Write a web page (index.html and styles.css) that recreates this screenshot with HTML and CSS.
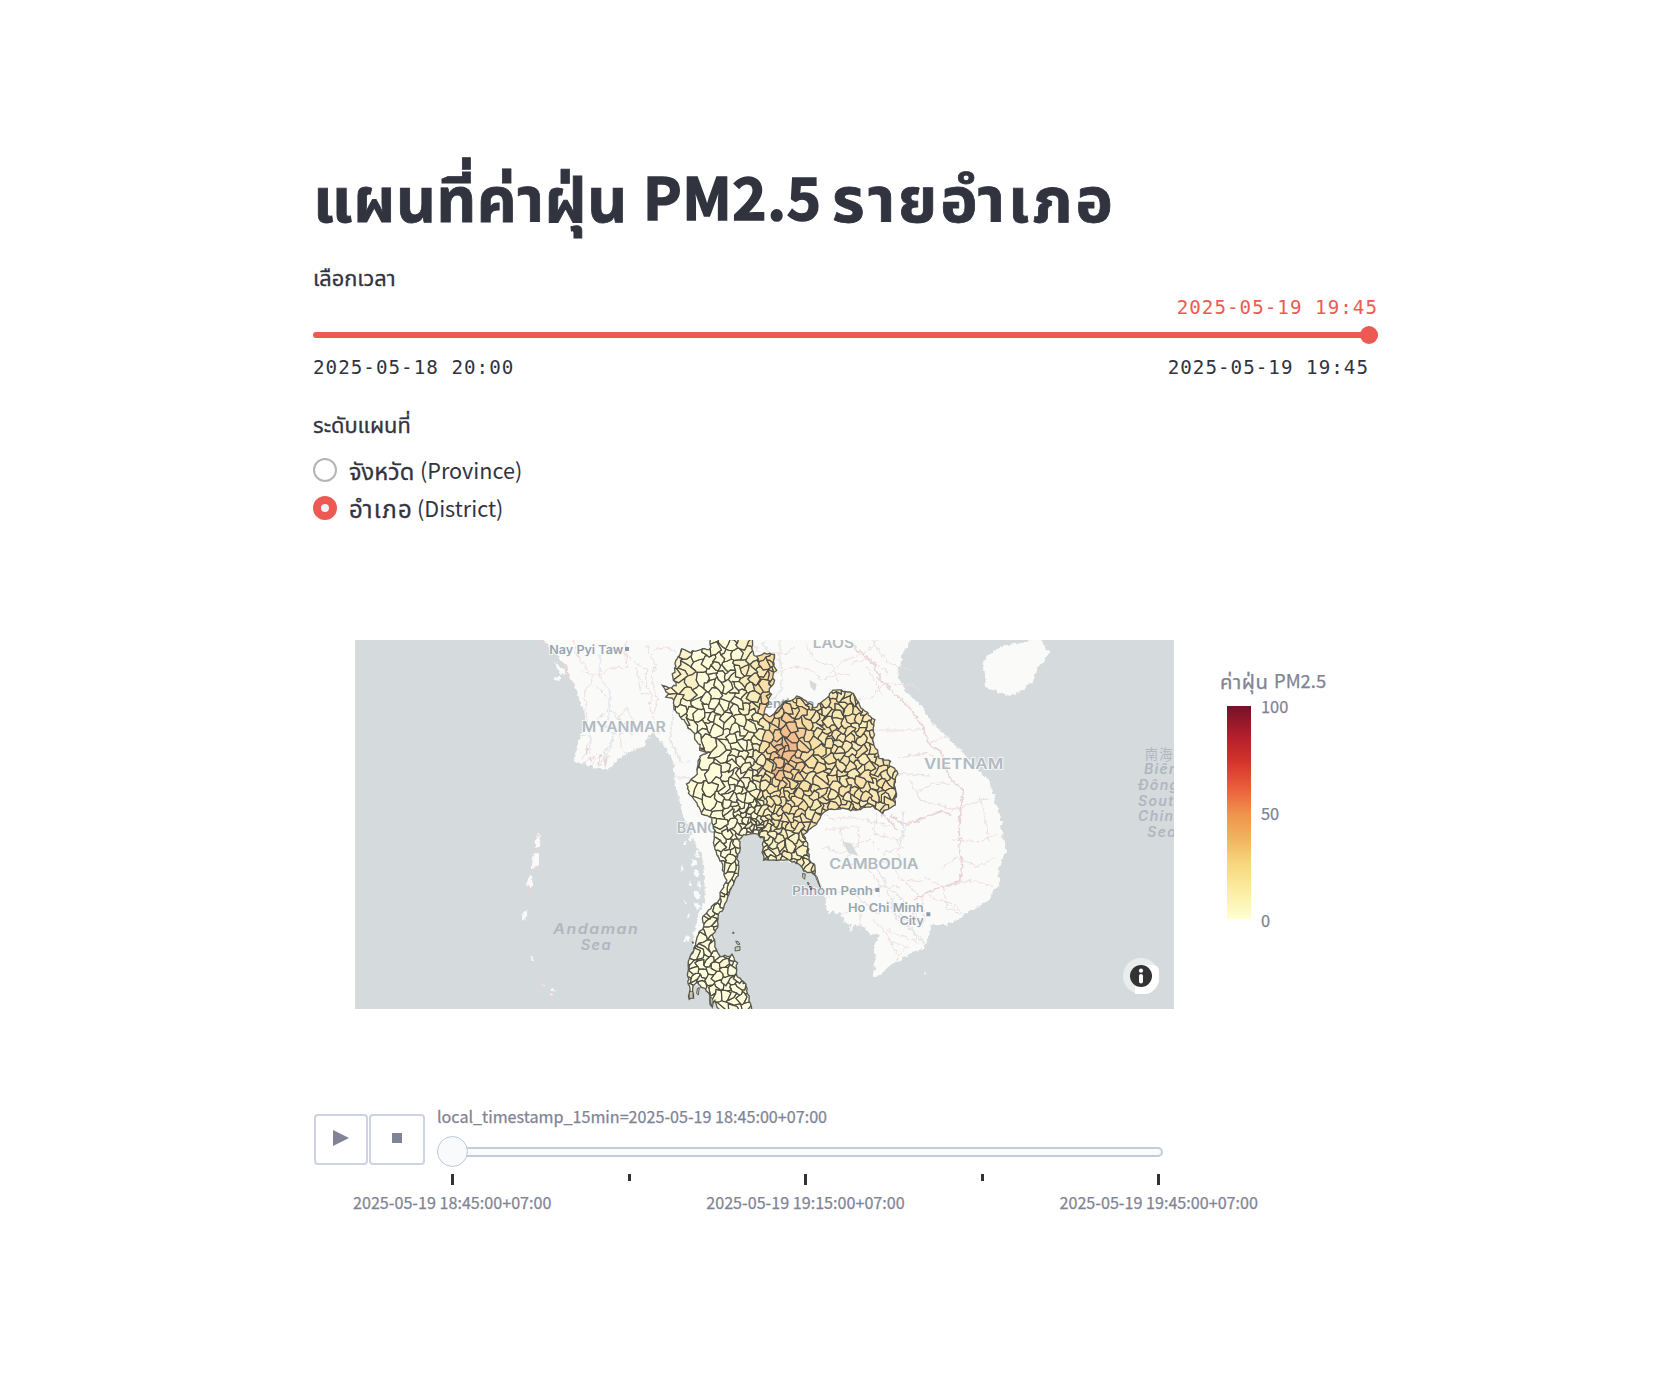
FILE: index.html
```html
<!DOCTYPE html>
<html lang="th">
<head>
<meta charset="utf-8">
<title>แผนที่ค่าฝุ่น PM2.5 รายอำเภอ</title>
<link rel="stylesheet" href="styles.css">
</head>
<body>
<main class="page">
  <h1 class="title"><span class="th t1">แผนที่ค่าฝุ่น</span><span class="t2">PM2.5</span><span class="th t3">รายอำเภอ</span></h1>

  <section class="time">
    <p class="label">เลือกเวลา</p>
    <p class="mono value">2025-05-19 19:45</p>
    <div class="track"><span class="thumb"></span></div>
    <div class="mono range"><span>2025-05-18 20:00</span><span>2025-05-19 19:45</span></div>
  </section>

  <section class="level">
    <p class="label">ระดับแผนที่</p>
    <div class="option"><span class="radio"></span><span class="th o1">จังหวัด</span><span class="lat">(Province)</span></div>
    <div class="option"><span class="radio on"></span><span class="th o2">อำเภอ</span><span class="lat">(District)</span></div>
  </section>

  <section class="chart">
    <svg class="map" viewBox="-855 30 2457 1107" preserveAspectRatio="none">
      <defs>
        <filter id="rough" x="-5%" y="-5%" width="110%" height="110%" color-interpolation-filters="sRGB"><feTurbulence type="fractalNoise" baseFrequency=".07" numOctaves="3" seed="4"/><feDisplacementMap in="SourceGraphic" scale="17" xChannelSelector="R" yChannelSelector="G"/></filter>
        <clipPath id="thai"><path id="outline" d="M212 20L210 58 195 55 150 66 127 56 120 75 107 92 104 125 97 133 108 165 95 172 70 168 85 190 80 200 100 208 103 235 125 265 150 300 165 310 163 330 178 345 180 362 205 365 182 378 172 400 170 435 142 460 148 490 175 525 185 550 215 565 225 600 220 640 235 688 245 695 250 730 262 750 245 780 235 810 205 840 190 860 190 890 175 915 165 945 160 965 150 980 142 1030 148 1070 148 1105 160 1102 158 1070 170 1055 185 1070 205 1090 215 1130 222 1110 240 1145 335 1145 325 1100 315 1060 288 1035 290 1000 278 975 240 980 232 965 222 940 220 915 232 890 235 860 250 835 260 805 275 770 292 735 297 710 290 680 300 655 297 630 310 615 345 612 370 625 368 650 370 688 400 690 440 690 475 700 490 720 525 735 525 705 505 690 505 645 490 615 500 605 530 582 550 545 600 535 640 540 700 530 725 548 765 525 768 490 763 460 773 425 750 405 752 392 720 385 700 340 703 270 670 240 640 190 610 183 580 178 560 205 535 222 525 235 515 225 490 210 473 198 455 212 440 210 410 240 390 262 372 250 385 220 393 195 385 180 402 160 400 135 408 122 400 100 402 75 380 70 345 78 335 60 340 20Z"/></clipPath>
      </defs>
      <rect class="sea" x="-855" y="30" width="2457" height="1107"/>
      <g filter="url(#rough)">
        <path class="land" d="M-305 10L-260 60-225 110-205 150-190 180-180 215-165 245-170 290-185 340-198 395-170 400-135 415-100 420-75 400-55 380-20 360 15 345 30 315 40 305 75 350 100 400 105 450 115 500 130 560 150 590 165 640 185 670 190 720 197 770 190 820 172 870 160 910 160 965 155 1030 160 1060 205 1075 240 1145 325 1145 310 1060 283 1035 285 1000 275 980 240 985 217 940 227 890 245 835 270 770 292 710 285 680 295 655 292 630 305 610 345 607 372 625 372 685 475 700 525 735 545 770 557 805 558 835 575 858 600 848 610 870 630 885 632 912 640 885 665 887 690 912 720 915 704 945 708 985 698 1040 720 1036 745 1010 820 965 850 955 870 910 875 885 920 885 980 850 1050 810 1060 780 1078 770 1075 720 1098 665 1085 610 1082 560 1065 510 1050 455 1020 425 970 370 910 310 865 265 842 225 795 185 772 130 790 70 825 10Z"/>
        <path class="land" d="M1028 95L1065 60 1100 45 1150 38 1200 25 1228 70 1195 110 1182 150 1150 180 1108 198 1070 185 1035 170ZM-258 95L-240 105-220 130-225 138-245 125ZM-258 140L-240 138-240 155-252 152ZM-305 612L-298 615-300 650-312 655-313 630ZM-318 670L-306 670-306 700-312 712-325 715-322 690ZM-333 735L-322 735-324 770-335 772-340 760ZM-352 845L-340 842-338 860-345 872-354 865ZM-326 984h8v8h-8zM-298 1064h6v6h-6zM-270 1090h6v6h-6zM-262 1075h5v8h-5zM852 1028h7v5h-7z"/>
        <path class="land" d="M150 610l10 8-4 14-10-6zM130 632l8-2 4 12-10 2zM165 660l12 4 2 18-12 0zM152 690l16 0 6 16-14 6zM125 708l6 4-3 14-6-4zM160 722l14 0 4 20-14-2zM172 756l10 4 2 16-12-4zM148 755l8 6-4 8zM160 786l14-4 6 18-12 8zM165 820l12 0 2 14-12 4zM130 810l7 6-5 6zM145 850l5 2-3 12-6-2zM140 915l8 6-6 16-8-2z"/>
        <g class="border">
          <path d="M-200 30l8 40 22 30 25 40 0 25-18 10 0 60 8 70-25 20M-175 120l30 15 30 0 20-20 55-3-3-80M-130 170l30 30M-10 110l12 80 25 2M-60 60l50 40 30 20 0 50M-70 270l30-35 35 70M-155 330l-5 40-15 20M-60 290l3 55 15 30M-150 380l-20 25M-130 370l-12 35M-110 365l10 45M-90 380l-18 15M0 150l35 40-5 50 30 70M45 60l30-10 30 15M20 45l25 60-10 50 18 50-12 50M105 365l20 30 25 0M105 440l45 5M335 50l40 20 70 0 15-20M420 30l0 90M410 130l50-20 55 10 30 30 50-20 35 5M500 40l20 50 60 20 15 50M570 130l45-40 60-20 40-40M635 100l50-15 60 45"/>
          <path d="M640 50l60 50 20 50 35 30 60 60 30 45 25 60 35 20 25 80 40 35-12 90 0 80 10 60-10 45-80 25-55 30" class="strong"/>
          <path d="M730 160l90 5 20 20M700 300l145 0M620 220l80-20 30-40M680 110l45 80M695 30l50 70 70 20M870 340l50-25M775 380l90-10 40 50M770 430l100 5M810 450l30 60 95 25M830 490l45-30 60 0M935 540l60-20 50-15M1020 500l20 90 10 50M935 630l85 5 60-25M710 550l-10 60 75 20 0 60M550 550l30 20 40-10 60 10 70 20M555 600l100-10 0 60-60 20-45-20M600 590l10 60 80-20 40 40 60-20M640 640l-20 60 60 10 40 50 0 40M700 690l60 10 20 50 70 5M560 800l60-20 30 20 70-30 60 0M610 850l50-30 0 80M650 800l60 50 40-20 30 50M730 760l30 60 50 10 25 60M790 750l60 60 0 80M850 740l60 30 10 60 40 20M900 720l50-40 60 30 60-30M920 770l80-20 60 20M870 800l60 20 40 30M700 870l40 40 30 60M740 900l100 40M740 930l60 20-30 40"/>
          <path class="strong" d="M750 555l40 30 60-20 50-20 30 10M725 550l50 50"/>
          <path class="strong" d="M-302 34l22 12 20 20M-235 95l16 20 2 28M-305 615l6 12M-322 668l12-2M-308 705l-4 14M-332 772l0 16-6 8M-300 1066l8 6M-268 1078l6 18M-158 355l-4 22M-140 375l-10 24M-118 372l-8 30M-100 380l-4 26"/>
        </g>
        <path class="river" d="M-120 70l0 70 30 45 0 55 40 40 30 40M-95 240l-35 30-20 40-2 60M-90 250l-15 40 30 20-20 60-30 40M-80 320l-30 60M365 40l60 60 0 80-30 30M100 230l-10 100 30 60M790 540l0 60-10 50M700 690l40 80 50 40 60 70M740 810l60 60 30 60M760 800l-5 40 100 100M200 1010l10 60M780 630l30-60"/>
      </g>
      <path class="sea" d="M608 635l25 5 22 38-30-10zM508 150l22 12-5 22-13-12zM560 860l20-20 10 20 12-8-8 20-26-2z"/>
      <g class="names">
        <text class="city" x="-272" y="73" textLength="222" lengthAdjust="spacingAndGlyphs">Nay Pyi Taw</text>
        <text x="-175" y="306" textLength="252" lengthAdjust="spacingAndGlyphs">MYANMAR</text>
        <text x="518" y="54" textLength="124" lengthAdjust="spacingAndGlyphs">LAOS</text>
        <text x="852" y="418" textLength="238" lengthAdjust="spacingAndGlyphs">VIETNAM</text>
        <text x="568" y="717" textLength="268" lengthAdjust="spacingAndGlyphs">CAMBODIA</text>
        <text x="110" y="609" textLength="215" lengthAdjust="spacingAndGlyphs">BANGKOK</text>
        <text class="city" x="334" y="234" textLength="188" lengthAdjust="spacingAndGlyphs">Vientiane</text>
        <text class="city" x="457" y="795" textLength="242" lengthAdjust="spacingAndGlyphs">Phnom Penh</text>
        <text class="city" x="624" y="846" textLength="227" lengthAdjust="spacingAndGlyphs">Ho Chi Minh</text>
        <text class="city" x="779" y="884" textLength="72" lengthAdjust="spacingAndGlyphs">City</text>
        <g class="water">
          <text x="-260" y="912" textLength="258" lengthAdjust="spacingAndGlyphs">Andaman</text><text x="-178" y="959" textLength="94" lengthAdjust="spacingAndGlyphs">Sea</text>
          <text class="cjk" x="1514" y="386">南海</text>
          <text x="1512" y="432">Biển</text><text x="1494" y="480">Đông</text><text x="1494" y="527">South</text><text x="1494" y="573">China</text><text x="1522" y="620">Sea</text>
        </g>
      </g>
      <path class="dot" d="M-45 51h12v12h-12zM706 774h12v12h-12zM859 847h12v12h-12z"/>
      <g>
        <g id="districts" clip-path="url(#thai)"></g>
        <use href="#outline" class="edge"/>
        <path class="isle" d="M286 951l14-2 0 12-15 2zM287 933l8 2 5 8-8 0zM278 907h4v3h-4zM525 735l6 4 10 34-10-22zM503 756l5 6-4 2zM508 768l8 4-3 8zM488 730l8 2-2 16-6-6zM157 935l4 2-2 4zM165 945l3 5-3 5zM172 1075l6-2-3 22-5-4zM148 1085l11 0 0 20-11 0zM212 1100l7 10-1 20-6-12z"/>
      </g>
    </svg>
    <button class="info" aria-label="Info"><svg viewBox="0 0 36 36"><circle cx="18" cy="18" r="18" fill="#fff" fill-opacity=".5"/><path d="M12 36V7h17q7 0 7 6v10q-2 8-9 12-3 1-5 1z" fill="#fff"/><circle cx="18" cy="18" r="11" fill="#333"/><circle cx="18" cy="12.7" r="2.1" fill="#fff"/><rect x="16" y="16" width="4" height="9.5" rx="2" fill="#fff"/></svg></button>
    <aside class="legend">
      <p class="legend-title"><span class="th">ค่าฝุ่น</span><span>PM2.5</span></p>
      <div class="scale"><div class="ramp"></div><div class="nums"><span>100</span><span>50</span><span>0</span></div></div>
    </aside>
  </section>

  <section class="player">
    <button class="btn"><svg width="16" height="16" viewBox="0 0 16 16"><path d="M0 0l16 8-16 8z"/></svg></button>
    <button class="btn stop"><svg width="10" height="10"><rect width="10" height="10"/></svg></button>
    <div class="frames">
      <p class="current">local_timestamp_15min=2025-05-19 18:45:00+07:00</p>
      <div class="rail"><span class="grip"></span></div>
      <div class="ticks"><i></i><i class="minor"></i><i></i><i class="minor"></i><i></i></div>
      <div class="stamps"><span>2025-05-19 18:45:00+07:00</span><span>2025-05-19 19:15:00+07:00</span><span>2025-05-19 19:45:00+07:00</span></div>
    </div>
  </section>
</main>
<script src="districts.js"></script>
</body>
</html>
```
FILE: styles.css
```css
* { box-sizing: border-box; }
body { margin: 0; background: #fff; color: #31333f; font-family: "Noto Sans CJK SC", "Noto Sans Thai", sans-serif; }
p, h1 { margin: 0; white-space: nowrap; }
.page { width: 1656px; height: 1376px; padding: 145px 278px 0 313px; overflow: hidden; display: flex; flex-direction: column; }
.title { height: 100px; line-height: 100px; font-size: 58px; font-weight: 700; display: flex; }
.title .th { font-size: 62px; letter-spacing: .4px; -webkit-text-stroke: .8px #31333f; }
.title .t3 { font-size: 63px; letter-spacing: 3px; }
.t1 { width: 330px; }
.t2 { width: 189px; -webkit-text-stroke: 1.6px #31333f; letter-spacing: .6px; }
.label { font-size: 21.8px; line-height: 30px; height: 30px; -webkit-text-stroke: .3px #31333f; }
.time { height: 146px; margin-top: 17px; }
.mono { font-family: "DejaVu Sans Mono", monospace; font-size: 19.2px; letter-spacing: 1.03px; line-height: 24px; }
.value { color: #ed5a53; text-align: right; height: 24px; margin-top: 4px; }
.track { height: 6px; margin-top: 12px; border-radius: 3px; background: #ed5a53; position: relative; }
.thumb { position: absolute; right: 0; top: -6px; width: 18px; height: 18px; border-radius: 50%; background: #ed5a53; }
.range { display: flex; justify-content: space-between; padding-right: 9px; margin-top: 18px; }
.level { margin-top: 1px; height: 231px; }
.level .label { margin-bottom: 12px; }
.option { display: flex; align-items: center; height: 38px; font-size: 21.6px; line-height: 38px; }
.option .th { font-size: 23.6px; -webkit-text-stroke: .3px #31333f; }
.option .o2 { font-size: 24px; letter-spacing: 1.3px; }
.radio { width: 24px; height: 24px; border-radius: 50%; border: 2px solid #b4b5b9; margin-right: 12px; background: #fff; }
.radio.on { border: 8px solid #ed5a53; background: #f0f2f6; }
.o1 { width: 71px; }
.o2 { width: 68px; }
.chart { position: relative; height: 369px; padding-left: 42px; display: flex; }
.map { width: 819px; height: 369px; display: block; flex: none; }
.sea { fill: #d5dadd; }
.land { fill: #fafaf8; }
.border { fill: none; stroke: #eddddf; stroke-width: 3; }
.strong { stroke: #ead3d8; stroke-width: 5; }
.river { fill: none; stroke: #e2e6ea; stroke-width: 4; }
.names { font: 600 42px Inter, sans-serif; fill: #b1bac3; stroke: #fafaf8; stroke-width: 5; paint-order: stroke; }
.city { font-size: 36px; fill: #97a5b2; }
.water { font-style: italic; font-weight: 600; fill: #b0b6bf; stroke: none; letter-spacing: 4px; }
.cjk { font: 400 40px "Noto Sans CJK SC", sans-serif; }
.dot { fill: #8c9bab; }
.edge { fill: none; stroke: #5a5a54; stroke-width: 4; }
.isle { fill: #c9c9ae; stroke: #4d4d48; stroke-width: 2.5; }
#districts path { stroke: #4b4b45; stroke-width: 3.7; stroke-linejoin: round; }
.info { position: absolute; left: 810px; top: 318px; width: 36px; height: 36px; border: 0; padding: 0; background: none; }
.info svg { display: block; }
.legend { margin-left: 46px; padding-top: 24px; color: #808495; -webkit-text-stroke: .25px #808495; }
.legend-title { height: 32px; line-height: 32px; font-size: 18.4px; display: flex; gap: 5px; }
.legend-title .th { font-size: 20.3px; width: 49px; letter-spacing: .5px; }
.scale { display: flex; margin: 10px 0 0 7px; gap: 10px; }
.ramp { width: 24px; height: 213px; background: linear-gradient(#741228, #b5202b 15%, #d3342a 26%, #ea5c3a 38%, #ef944d 51%, #f1b35c 62%, #f6d77f 74%, #fbec9f 86%, #ffffd0); }
.nums { display: flex; flex-direction: column; justify-content: space-between; height: 238px; margin-top: -12px; font-size: 16.4px; line-height: 24px; }
.player { display: flex; height: 130px; margin-top: 95px; padding-left: 1px; color: #808495; -webkit-text-stroke: .25px #808495; }
.btn { width: 54px; height: 51px; margin: 10px 1px 0 0; padding: 0 0 4px; border: 2px solid #cdd3e3; border-radius: 4px; background: #fff; display: flex; align-items: center; justify-content: center; fill: #808495; }
.stop { width: 56px; }
.frames { margin-left: 11px; width: 726px; }
.current { font-size: 16.15px; line-height: 24px; height: 42px; }
.rail { height: 10px; margin-top: 1px; border: 2px solid #c4ccdc; border-radius: 5px; background: #f8fafc; position: relative; }
.grip { position: absolute; left: -2px; top: -13px; width: 31px; height: 31px; border: 1.5px solid #bec8d9; border-radius: 50%; background: #f8fafc; }
.ticks { display: flex; justify-content: space-between; margin: 17px 3px 0 14px; height: 11px; }
.ticks i { width: 3px; height: 11px; background: #333; }
.ticks .minor { height: 7px; }
.stamps { display: flex; justify-content: space-between; width: 905px; margin: 5px 0 0 -84px; font-size: 16.15px; line-height: 24px; white-space: nowrap; }
```
FILE: districts.js
```js
// Partitions the country into district cells, coloured by dust level.
(function () {
  var seed = 7;
  function rnd() { seed = (seed * 16807) % 2147483647; return seed / 2147483647; }
  function spacing(x, y) {
    var b = Math.hypot(x - 340, y - 580);
    if (b < 25) return 6;
    if (b < 60) return 10;
    if (b < 110) return 14;
    if (y > 950) return 16;
    if (y > 640) return 18;
    if (x < 240 && y > 340) return 34;
    if (x < 200) return 25;
    if (x > 500 && y > 190) return 16;
    if (x > 250 && y > 330) return 16;
    return 20;
  }
  var pts = [];
  for (var i = 0; i < 9000; i++) {
    var x = 60 + rnd() * 720, y = 20 + rnd() * 1125, s = spacing(x, y) * (0.7 + rnd() * 0.6), ok = true;
    for (var j = 0; j < pts.length && ok; j++) {
      if (Math.hypot(pts[j][0] - x, (pts[j][1] - y) * 0.8) < s) ok = false;
    }
    if (ok) pts.push([x, y]);
  }
  var stops = [[0, 255, 255, 222], [0.25, 251, 243, 200], [0.5, 248, 222, 164], [0.75, 243, 189, 142], [1, 232, 145, 122]];
  function colour(v) {
    v = Math.max(0, Math.min(0.999, v));
    var k = Math.floor(v * 4), t = v * 4 - k, a = stops[k], b = stops[k + 1];
    return 'rgb(' + [1, 2, 3].map(function (n) { return Math.round(a[n] + (b[n] - a[n]) * t); }) + ')';
  }
  function level(x, y) {
    var v = 0.04;
    if (y < 600) v += 0.36 / (1 + Math.exp((350 - x) / 22));
    if (y >= 600 && x > 370) v += 0.25;
    if (x < 170 && y < 220) v += 0.2;
    if (y < 250 && x > 300 && x < 410) v += 0.18;
    v += 0.38 * Math.exp(-(Math.pow((x - 435) / 65, 2) + Math.pow((y - 350) / 115, 2)));
    v += 0.2 * Math.exp(-(Math.pow((x - 420) / 14, 2) + Math.pow((y - 420) / 25, 2)));
    return v + (rnd() - 0.5) * 0.12;
  }
  // Bends a shared edge the same way from both of its cells.
  function hash(x, y) {
    var h = Math.sin(Math.round(x * 2) * 12.9898 + Math.round(y * 2) * 78.233) * 43758.5453;
    return h - Math.floor(h) - 0.5;
  }
  function warp(v) {
    return [v[0] + 4 * Math.sin(v[1] / 9) + 3 * Math.sin(v[0] / 5 + v[1] / 6),
            v[1] + 4 * Math.sin(v[0] / 8 + 1) + 3 * Math.sin(v[1] / 6 - v[0] / 7)];
  }
  function fmt(v) { return v[0].toFixed(1) + ' ' + v[1].toFixed(1); }
  function outline(poly) {
    var r = [];
    poly.forEach(function (v, n) {
      var w = poly[(n + 1) % poly.length], dx = w[0] - v[0], dy = w[1] - v[1];
      var mx = (v[0] + w[0]) / 2, my = (v[1] + w[1]) / 2;
      var k = hash(mx, my) * 0.7, side = (dx > 0 || (dx === 0 && dy > 0)) ? 1 : -1;
      r.push(fmt(warp(v)));
      if (Math.hypot(dx, dy) > 5) r.push(fmt(warp([mx - dy * k * side, my + dx * k * side])));
    });
    return 'M' + r.join('L') + 'Z';
  }
  var out = '';
  pts.forEach(function (p) {
    var poly = [[p[0] - 70, p[1] - 70], [p[0] + 70, p[1] - 70], [p[0] + 70, p[1] + 70], [p[0] - 70, p[1] + 70]];
    pts.forEach(function (q) {
      var dx = q[0] - p[0], dy = q[1] - p[1];
      if (q === p || Math.abs(dx) > 110 || Math.abs(dy) > 110) return;
      var c = (q[0] * q[0] + q[1] * q[1] - p[0] * p[0] - p[1] * p[1]) / 2, next = [];
      for (var n = 0; n < poly.length; n++) {
        var a = poly[n], b = poly[(n + 1) % poly.length];
        var da = a[0] * dx + a[1] * dy - c, db = b[0] * dx + b[1] * dy - c;
        if (da <= 0) next.push(a);
        if (da * db < 0) { var t = da / (da - db); next.push([a[0] + (b[0] - a[0]) * t, a[1] + (b[1] - a[1]) * t]); }
      }
      poly = next;
    });
    out += '<path fill="' + colour(level(p[0], p[1])) + '" d="' + outline(poly) + '"/>';
  });
  document.getElementById('districts').innerHTML = out;
  // Adds small notches along the national boundary.
  var node = document.getElementById('outline');
  var nums = node.getAttribute('d').match(/\d+/g).map(Number), pairs = [];
  for (var m = 0; m < nums.length; m += 2) pairs.push([nums[m], nums[m + 1]]);
  var edge = [];
  pairs.forEach(function (v, n) {
    var w = pairs[(n + 1) % pairs.length], steps = Math.max(1, Math.round(Math.hypot(w[0] - v[0], w[1] - v[1]) / 8));
    for (var q = 0; q < steps; q++) edge.push(fmt([v[0] + (w[0] - v[0]) * q / steps + (rnd() - 0.5) * 6, v[1] + (w[1] - v[1]) * q / steps + (rnd() - 0.5) * 6]));
  });
  node.setAttribute('d', 'M' + edge.join('L') + 'Z');
})();
```
